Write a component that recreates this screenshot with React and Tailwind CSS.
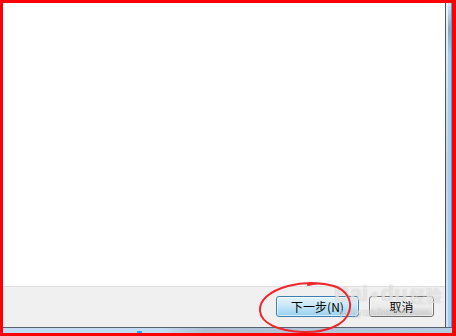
import React from 'react';

const cjk = { fontFamily: '"Noto Sans CJK SC", "Liberation Sans", sans-serif' };

const Scribble = () => (
    <svg className="absolute left-[250px] top-[278px] pointer-events-none" width="110" height="58" viewBox="0 0 110 58" fill="none">
        <path
            d="M92 12 C80 4 56 3 38 8 C20 13 9 22 10 33 C11 45 28 53 52 54 C76 55 95 47 99 34 C103 22 96 12 84 8 C74 5 64 5 58 7"
            stroke="#f0262a"
            strokeWidth="2"
            strokeLinecap="round"
        />
    </svg>
);

const Watermark = () => (
    <div className="absolute left-[334px] top-[283px] pointer-events-none select-none" style={{ fontFamily: '"Liberation Sans", sans-serif' }}>
        <div className="flex items-end gap-[2px] text-[22px] font-bold leading-none text-white/60 [text-shadow:0_0_1px_rgba(150,150,150,0.6)]">
            <span>Bai</span>
            <span className="text-[14px] mb-[4px]">●</span>
            <span>du</span>
            <span className="text-[16px] mb-[2px]" style={cjk}>经验</span>
        </div>
        <div className="text-[11px] leading-none mt-[2px] ml-[6px] text-white/50 [text-shadow:0_0_1px_rgba(150,150,150,0.6)]">jingyan.baidu.com</div>
    </div>
);

const App = () => {
    return (
        <div className="relative w-[456px] h-[336px] bg-[#ff0000] pt-[3px] pl-[3px] pr-[4px] pb-[3px] overflow-hidden">
            <div className="flex flex-col w-full h-full">
                <div className="flex flex-1 min-h-0">
                    <div className="flex flex-col flex-1">
                        <div className="flex-1 bg-white border-b border-[#dfdfdf]" />
                        <div className="h-[40px] bg-[#f0f0f0] flex justify-end items-start pt-[9px] pr-[11px] gap-[10px]" style={cjk}>
                            <button className="w-[83px] h-[21px] rounded-[3px] border border-[#3c7fb1] bg-gradient-to-b from-[#e5f4fc] via-[#c4e5f6] to-[#98d1ef] text-[12px] leading-none text-black shadow-[inset_0_0_0_1px_rgba(255,255,255,0.6)]">
                                下一步(N)
                            </button>
                            <button className="w-[65px] h-[21px] rounded-[3px] border border-[#707070] bg-gradient-to-b from-[#f2f2f2] via-[#ebebeb] to-[#cfcfcf] text-[12px] leading-none text-black shadow-[inset_0_0_0_1px_rgba(255,255,255,0.7)]">
                                取消
                            </button>
                        </div>
                    </div>
                    <div className="w-[7px] flex">
                        <div className="w-[1px] bg-[#4b5866]" />
                        <div className="w-[2px] bg-gradient-to-b from-[#eef3f8] via-[#c9d4de] to-[#d3e4f4]" />
                        <div className="flex-1 bg-gradient-to-b from-[#dde9f5] via-[#8fa4ba] via-[8%] to-[#a9cdf0] to-[16%]" />
                        <div className="w-[1px] bg-[#3da2ea]" />
                    </div>
                </div>
                <div className="h-[6px] flex flex-col">
                    <div className="h-[1px] bg-[#56636f]" />
                    <div className="flex-1 relative bg-gradient-to-r from-[#c3dcf5] from-[35%] via-[#aebfd2] via-[45%] to-[#b4cbe2]">
                        <div className="absolute left-[134px] bottom-0 w-[5px] h-[2px] bg-[#2fa3ff]" />
                    </div>
                </div>
            </div>
            <Watermark />
            <Scribble />
        </div>
    );
};

export default App;
